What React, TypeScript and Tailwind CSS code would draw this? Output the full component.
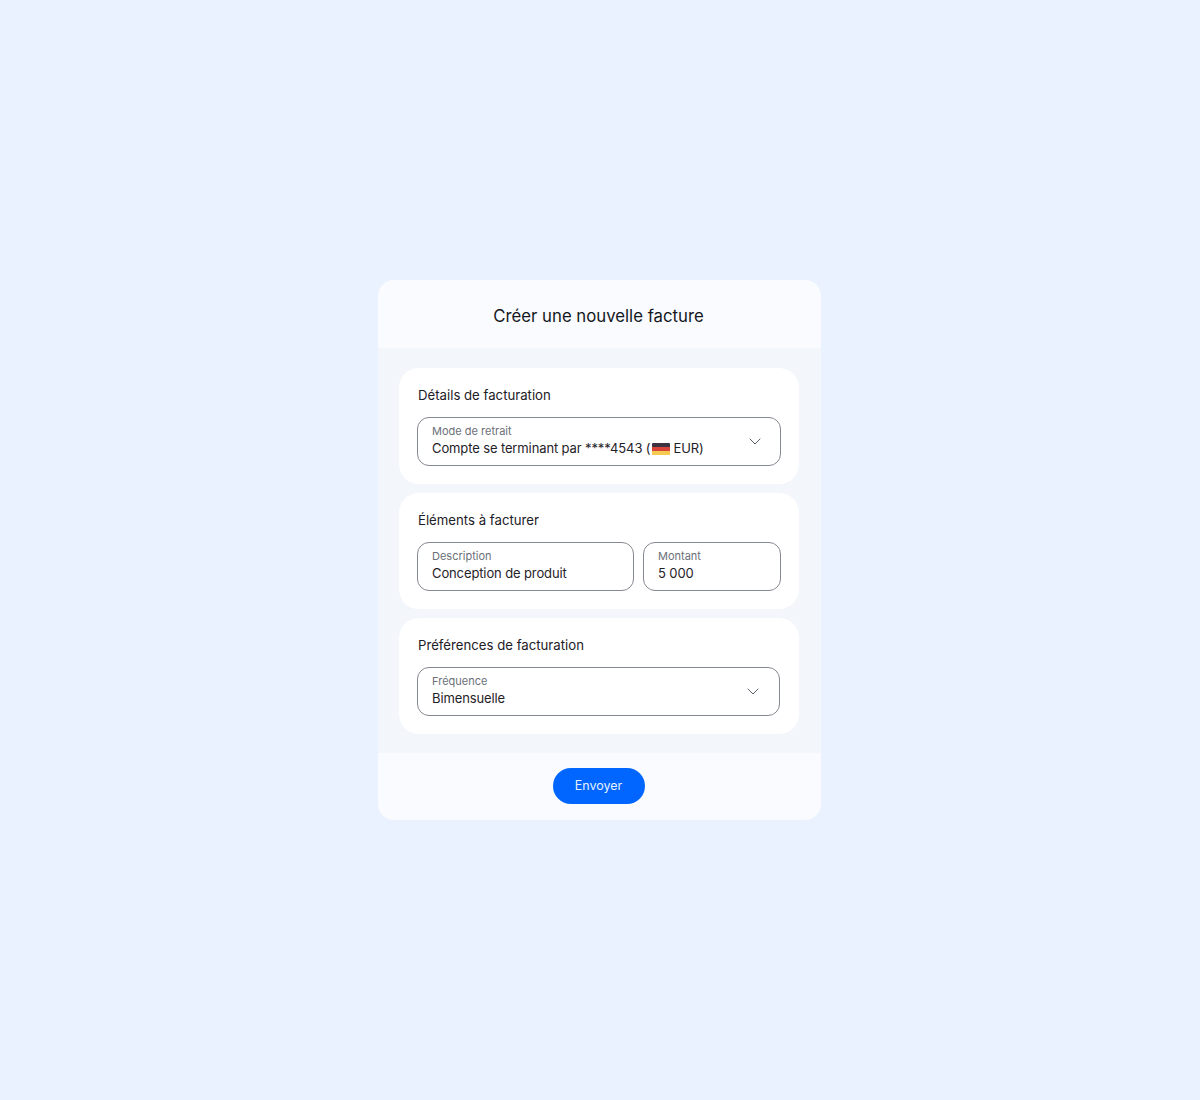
const headingFont = "font-['Inter','Liberation_Sans',sans-serif]";

function Chevron() {
  return (
    <svg width="12" height="7" viewBox="0 0 12 7" fill="none" className="shrink-0">
      <path d="M1 1l5 5 5-5" stroke="#5b616b" strokeWidth="1" strokeLinecap="round" strokeLinejoin="round" />
    </svg>
  );
}

function GermanFlag() {
  return (
    <span className="mr-[3px] ml-[2px] flex h-[13px] w-[18px] flex-col overflow-hidden rounded-[1px]">
      <span className="flex-1 bg-[#3b3340]" />
      <span className="flex-1 bg-[#d9443a]" />
      <span className="flex-1 bg-[#f6cb52]" />
    </span>
  );
}

function Field({ label, className, children, chevronClass }: { label: string; className: string; children: React.ReactNode; chevronClass?: string }) {
  return (
    <div className={`flex h-[49px] items-center rounded-xl border border-[#84888f] bg-white pl-[14px] ${className}`}>
      <div className="min-w-0 flex-1 pb-px">
        <div className="text-[11px] leading-[14px] text-[#6b7078]">{label}</div>
        <div className="mt-[2px] flex h-[18px] items-center text-[13px] tracking-[-0.12px] whitespace-pre text-[#1f2228]">{children}</div>
      </div>
      {chevronClass && <div className={chevronClass}><Chevron /></div>}
    </div>
  );
}

function Section({ title, children }: { title: string; children: React.ReactNode }) {
  return (
    <section className="h-[116px] rounded-[20px] bg-white px-[18px] pt-[18px]">
      <h2 className={`${headingFont} mb-[13px] pl-px text-[13.2px] leading-[18px] text-[#1d2026]`}>{title}</h2>
      {children}
    </section>
  );
}

export default function App() {
  return (
    <div className="h-[1100px] bg-[#e9f2fe] pt-[280px] pl-[378px] font-['Inter',sans-serif]">
      <div className="w-[443px] overflow-hidden rounded-2xl bg-[#f3f6fa]">
        <header className="flex h-[68px] items-center justify-center bg-[#f9fbff] pt-[3px] pr-[2px]">
          <h1 className={`${headingFont} text-[16.75px] leading-[24px] text-[#15171c]`}>Créer une nouvelle facture</h1>
        </header>
        <main className="flex h-[405px] flex-col gap-[9px] pt-5 pr-[22px] pl-[21px]">
          <Section title="Détails de facturation">
            <Field label="Mode de retrait" className="w-[364px]" chevronClass="pr-[19px]">
              Compte se terminant par ****4543 (<GermanFlag />EUR)
            </Field>
          </Section>
          <Section title="Éléments à facturer">
            <div className="flex gap-[9px]">
              <Field label="Description" className="w-[217px]">Conception de produit</Field>
              <Field label="Montant" className="w-[138px]">5 000</Field>
            </div>
          </Section>
          <Section title="Préférences de facturation">
            <Field label="Fréquence" className="w-[363px]" chevronClass="pr-[20px]">Bimensuelle</Field>
          </Section>
        </main>
        <footer className="flex h-[67px] justify-center bg-[#f9fbfe] pt-[15px] pr-[2px]">
          <button className="h-9 w-[92px] rounded-full bg-[#0066ff] text-[12.5px] text-[#e6f0ff]">Envoyer</button>
        </footer>
      </div>
    </div>
  );
}
